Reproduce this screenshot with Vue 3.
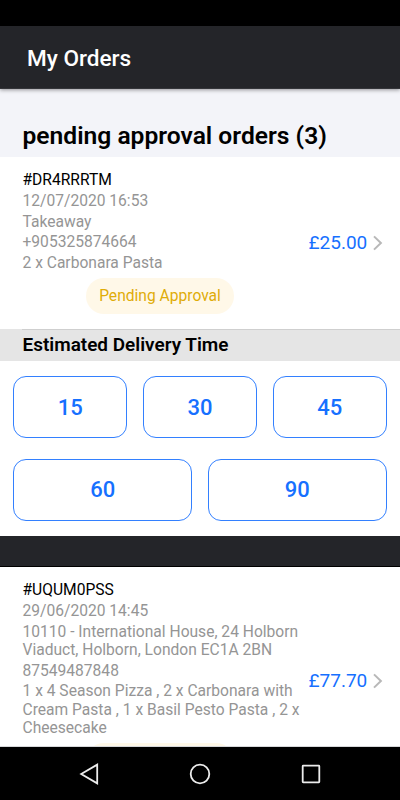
<script setup>
const orders = [
  {
    id: '#DR4RRRTM',
    lines: [['12/07/2020 16:53'], ['Takeaway'], ['+905325874664'], ['2 x Carbonara Pasta']],
    price: '£25.00',
    status: 'Pending Approval',
  },
  {
    id: '#UQUM0PSS',
    lines: [
      ['29/06/2020 14:45'],
      ['10110 - International House, 24 Holborn', 'Viaduct, Holborn, London EC1A 2BN'],
      ['87549487848'],
      ['1 x 4 Season Pizza , 2 x Carbonara with', 'Cream Pasta , 1 x Basil Pesto Pasta , 2 x', 'Cheesecake'],
    ],
    price: '£77.70',
    status: '',
  },
]
const timeRows = [[15, 30, 45], [60, 90]]
</script>

<template>
  <div class="phone">
    <div class="status-bar"></div>
    <header class="toolbar"><h1>My Orders</h1></header>
    <main class="content">
      <div class="list-header"><h2>pending approval orders (3)</h2></div>
      <template v-for="(order, i) in orders" :key="order.id">
        <section class="order" :class="{ tall: i === 1 }">
          <div class="label">
            <h3>{{ order.id }}</h3>
            <p v-for="line in order.lines" :key="line[0]">
              <span v-for="part in line" :key="part">{{ part }}</span>
            </p>
            <div class="badge-row"><span class="badge">{{ order.status }}</span></div>
          </div>
          <div class="price">{{ order.price }}</div>
          <svg class="chevron" viewBox="0 0 10 16"><path d="M1 1.4 7.9 8 1 14.6" /></svg>
        </section>
        <template v-if="i === 0">
          <div class="divider">Estimated Delivery Time</div>
          <div class="times">
            <div v-for="row in timeRows" :key="row[0]" class="time-row">
              <button v-for="t in row" :key="t">{{ t }}</button>
            </div>
          </div>
          <div class="separator"></div>
        </template>
      </template>
    </main>
    <nav class="nav-bar">
      <svg viewBox="0 0 24 24"><path d="M4.2 12 20.2 2.6V21.4Z" /></svg>
      <svg viewBox="0 0 24 24"><circle cx="12" cy="12" r="9.3" /></svg>
      <svg viewBox="0 0 24 24"><rect x="3.7" y="3.7" width="16.6" height="16.6" rx=".5" /></svg>
    </nav>
  </div>
</template>

<style>
body {
  background: #fff;
}
</style>

<style scoped>
* {
  box-sizing: border-box;
}
.phone {
  width: 400px;
  height: 800px;
  display: flex;
  flex-direction: column;
  overflow: hidden;
  font-family: Roboto, sans-serif;
  background: #fff;
}
h1, h2, h3, p {
  margin: 0;
}
.status-bar {
  height: 26px;
  flex: none;
  background: #000;
}
.toolbar {
  height: 63px;
  flex: none;
  display: flex;
  align-items: center;
  padding: 2px 27px 0;
  background: #242529;
  border-bottom: 1px solid #343539;
  box-shadow: 0 1px 4px rgba(0, 0, 0, 0.4);
  z-index: 1;
}
.toolbar h1 {
  color: #fff;
  font-size: 22.6px;
  font-weight: 500;
}
.content {
  flex: 1;
  min-height: 0;
  overflow: hidden;
  border-bottom: 1px solid #d7d8da;
}
.list-header {
  height: 68px;
  padding: 32px 22.5px 0;
  background: #f3f4f9;
}
.list-header h2 {
  font-size: 24.6px;
  line-height: 30px;
  font-weight: 600;
  white-space: nowrap;
}
.order {
  display: flex;
  height: 172px;
  padding: 14px 17px 0 22.5px;
}
.order.tall {
  height: 230px;
}
.label {
  width: 286px;
  flex: none;
  font-size: 15.6px;
  line-height: 18.4px;
}
.label h3 {
  font-size: 15.6px;
  font-weight: 400;
  color: #000;
  margin-bottom: 2.8px;
}
.label p {
  color: #959595;
  margin-bottom: 2.2px;
}
.label p span {
  display: block;
  white-space: nowrap;
}
.badge-row {
  display: flex;
  justify-content: center;
  padding: 3.2px 11px 0 0;
}
.badge {
  min-width: 148px;
  height: 36px;
  border-radius: 18px;
  background: #fff8e8;
  color: #e0ac08;
  text-align: center;
  line-height: 36px;
}
.price {
  width: 64px;
  padding-top: 60px;
  color: #1670ff;
  font-size: 19px;
  line-height: 24px;
}
.chevron {
  width: 10px;
  height: 16px;
  margin-top: 64px;
  fill: none;
  stroke: #b8b8b8;
  stroke-width: 2;
}
.tall .price {
  padding-top: 88px;
}
.tall .chevron {
  margin-top: 92px;
}
.divider {
  height: 32px;
  padding-left: 22.5px;
  background: linear-gradient(#cfcfcf, #cfcfcf) 22px 0 / 378px 1px no-repeat #e5e5e5;
  font-size: 18.95px;
  font-weight: 600;
  line-height: 31px;
}
.times {
  height: 175px;
  padding: 15px 13.4px 0;
  display: flex;
  flex-direction: column;
  gap: 20.5px;
}
.time-row {
  display: flex;
  gap: 16px;
}
.time-row button {
  flex: 1;
  height: 62px;
  padding: 0;
  border: 1px solid #3380ff;
  border-radius: 13px;
  background: #fff;
  color: #1670ff;
  font: 500 22px Roboto, sans-serif;
}
.separator {
  height: 31px;
  background: #242529;
  border-bottom: 1px solid #000;
}
.nav-bar {
  height: 53px;
  flex: none;
  display: flex;
  justify-content: center;
  align-items: center;
  gap: 87px;
  background: #000;
}
.nav-bar svg {
  width: 24px;
  height: 24px;
  fill: none;
  stroke: #ececec;
  stroke-width: 1.8;
}
</style>
